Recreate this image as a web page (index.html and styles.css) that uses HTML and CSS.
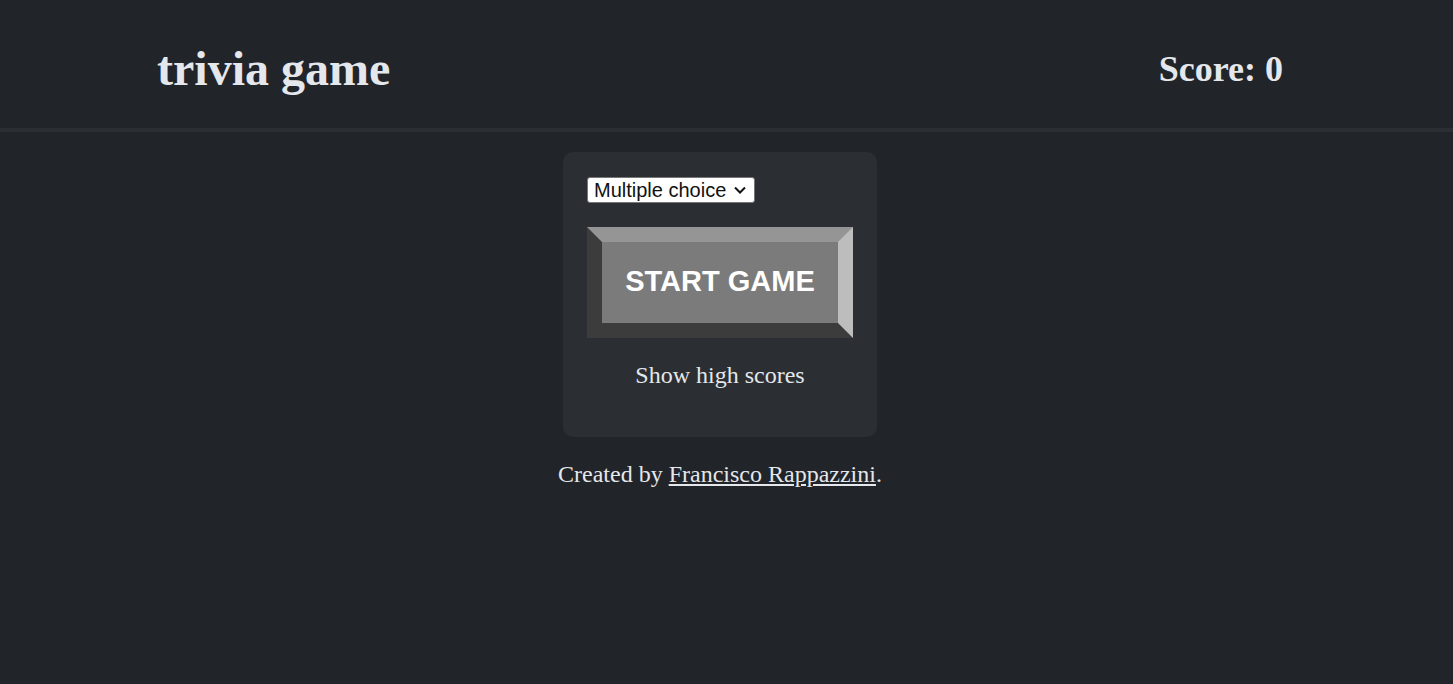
FILE: index.html
```html
<!DOCTYPE html>
<html lang="en">
<head>
<meta charset="utf-8">
<title>trivia game</title>
<link rel="stylesheet" href="styles.css">
</head>
<body>
  <header class="header">
    <h1 class="title">trivia game</h1>
    <h2 class="score">Score: 0</h2>
  </header>
  <main class="main">
    <section class="card">
      <select class="mode">
        <option>Multiple choice</option>
        <option>True / False</option>
      </select>
      <button class="start" type="button">START GAME</button>
      <button class="scores" type="button">Show high scores</button>
    </section>
    <p class="credit">Created by <a href="#" class="author">Francisco Rappazzini</a>.</p>
  </main>
</body>
</html>
```
FILE: styles.css
```css
html, body {
  margin: 0;
  padding: 0;
  background: #212429;
}
body {
  font-family: "Liberation Serif", "Times New Roman", serif;
  color: #e4e7eb;
  height: 684px;
  overflow: hidden;
}
.header {
  box-sizing: border-box;
  height: 132px;
  padding: 9px 170px 0 157px;
  display: flex;
  align-items: center;
  justify-content: space-between;
  border-bottom: 4px solid #2b2e33;
}
.title {
  margin: 0;
  font-size: 48px;
  font-weight: bold;
}
.score {
  margin: 0;
  font-size: 36px;
  font-weight: bold;
}
.main {
  display: flex;
  flex-direction: column;
  align-items: center;
  padding-top: 20px;
  padding-right: 13px;
}
.card {
  box-sizing: border-box;
  width: 314px;
  background: #2b2e33;
  border-radius: 10px;
  padding: 24px 24px 24px 24px;
  display: flex;
  flex-direction: column;
  align-items: stretch;
}
.mode {
  -webkit-appearance: none;
  appearance: none;
  align-self: flex-start;
  box-sizing: border-box;
  font-family: "Liberation Sans", Arial, sans-serif;
  font-size: 20px;
  line-height: 24px;
  color: #111;
  background-color: #fff;
  background-image: url("data:image/svg+xml,%3Csvg xmlns='http://www.w3.org/2000/svg' width='12' height='8' viewBox='0 0 12 8'%3E%3Cpath d='M1 1.5 L6 6.5 L11 1.5' fill='none' stroke='%23111' stroke-width='2'/%3E%3C/svg%3E");
  background-repeat: no-repeat;
  background-position: right 8px center;
  border: 1px solid #767676;
  border-radius: 3px;
  height: 26px;
  width: 168px;
  padding: 0 0 0 6px;
  margin: 1px 0 0 0;
}
.start {
  margin-top: 24px;
  box-sizing: border-box;
  height: 111px;
  background: #7b7b7b;
  border-style: solid;
  border-width: 15px;
  border-color: #959595 #bdbdbd #3c3c3c #3c3c3c;
  color: #fff;
  font-family: "Liberation Sans", Arial, sans-serif;
  font-weight: bold;
  font-size: 29px;
  line-height: 33px;
  padding: 0 0 2px 0;
  cursor: pointer;
}
.scores {
  margin-top: 23px;
  margin-bottom: 24px;
  background: none;
  border: none;
  padding: 0;
  color: #e4e7eb;
  font-family: "Liberation Serif", "Times New Roman", serif;
  font-size: 24px;
  line-height: 28px;
  cursor: pointer;
}
.credit {
  margin: 23px 0 0 0;
  font-size: 24px;
  line-height: 28px;
}
.author {
  color: #e4e7eb;
  text-decoration: underline;
}
```
